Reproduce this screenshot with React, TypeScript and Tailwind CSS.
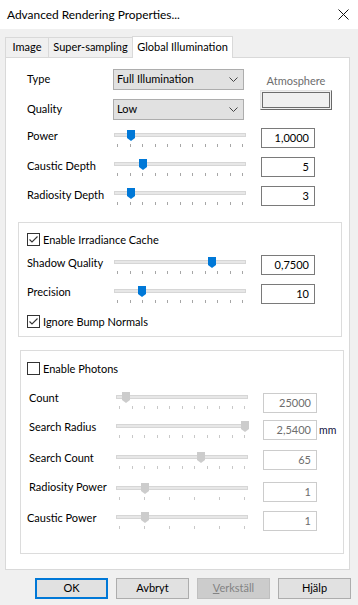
import React from "react";

const FONT = "font-['Lato','Noto_Sans',sans-serif]";

function Chevron() {
  return (
    <svg width="9" height="5" viewBox="0 0 9 5" className="shrink-0">
      <path d="M0.5 0.5L4.5 4.5L8.5 0.5" fill="none" stroke="#444" strokeWidth="1" />
    </svg>
  );
}

function Select({ text }: { text: string }) {
  return (
    <div className="flex h-[21px] w-[131px] items-center justify-between border border-[#adadad] bg-[#e1e1e1] pr-[5px] pl-[3px]">
      <span>{text}</span>
      <Chevron />
    </div>
  );
}

function Checkbox({ checked, label, cls }: { checked: boolean; label: string; cls: string }) {
  return (
    <div className={`flex h-[13px] items-center ${cls}`}>
      <div className="flex h-[13px] w-[13px] items-center justify-center border border-[#333] bg-white">
        {checked && (
          <svg width="11" height="11" viewBox="0 0 11 11">
            <path d="M1.5 5.5L4 8L9.5 2.5" fill="none" stroke="#333" strokeWidth="1.1" />
          </svg>
        )}
      </div>
      <span className="ml-[3px] leading-[16px] whitespace-nowrap">{label}</span>
    </div>
  );
}

function Slider({ pos, ticks = 11, disabled = false, cls }: { pos: number; ticks?: number; disabled?: boolean; cls: string }) {
  const color = disabled ? "#cccccc" : "#0078d7";
  return (
    <div className={`relative h-[18px] w-[132px] shrink-0 ${cls}`}>
      <div className="absolute top-[3px] right-0 left-0 h-[4px] border border-[#d6d6d6] bg-[#e7e7e7]" />
      <svg width="8" height="11" viewBox="0 0 8 11" className="absolute top-0" style={{ left: pos }}>
        <path d="M0 0H8V8L4 11L0 8Z" fill={color} />
      </svg>
      <div className="absolute top-[14px] right-[3px] left-[3px] flex justify-between">
        {Array.from({ length: ticks }).map((_, i) => (
          <div key={i} className={`h-[3px] w-px ${disabled ? "bg-[#c8c8c8]" : "bg-[#a6a6a6]"}`} />
        ))}
      </div>
    </div>
  );
}

type RowProps = {
  label: string;
  value: string;
  pos: number;
  lcls?: string;
  scls?: string;
  ticks?: number;
  disabled?: boolean;
  mm?: boolean;
  row: string;
};

function SliderRow({ label, value, pos, lcls = "ml-[8px] w-[87px] mt-0", scls = "mt-[2px]", ticks, disabled, mm, row }: RowProps) {
  return (
    <div className={`flex h-[20px] items-start ${row}`}>
      <span className={`shrink-0 leading-[16px] whitespace-nowrap ${lcls}`}>{label}</span>
      <Slider pos={pos} ticks={ticks} disabled={disabled} cls={scls} />
      <div
        className={`ml-[15px] flex h-[20px] w-[54px] shrink-0 items-center justify-end border bg-white pr-[5px] ${
          disabled ? "border-[#cccccc] text-[#6d6d6d]" : "border-[#7a7a7a]"
        }`}
      >
        {value}
      </div>
      {mm && <span className="mt-[3px] ml-[2px] text-[10.5px] text-[#101040]">mm</span>}
    </div>
  );
}

function Button({ label, cls = "", children }: { label?: string; cls?: string; children?: React.ReactNode }) {
  return (
    <div className={`flex h-[21px] w-[73px] items-center justify-center border ${cls}`}>
      {children ?? label}
    </div>
  );
}

export default function App() {
  return (
    <div className={`flex h-[605px] w-[358px] flex-col overflow-hidden bg-[#f0f0f0] text-[11px] text-black ${FONT}`}>
      <div className="flex h-[29px] items-center bg-white pl-[7px] text-[11.9px]">
        <span>Advanced Rendering Properties...</span>
        <svg width="11" height="11" viewBox="0 0 11 11" className="mr-[9px] ml-auto">
          <path d="M0.5 0.5L10.5 10.5M10.5 0.5L0.5 10.5" stroke="#111" strokeWidth="1" />
        </svg>
      </div>

      <div className="mt-[7px] flex h-[21px] items-end pl-[5px] whitespace-nowrap">
        <div className="flex h-[20px] w-[43px] items-center justify-center border-t border-l border-[#d9d9d9] bg-[#f0f0f0]">
          Image
        </div>
        <div className="flex h-[20px] w-[84px] items-center justify-center border-t border-l border-[#d9d9d9] bg-[#f0f0f0]">
          Super-sampling
        </div>
        <div className="relative z-10 -mb-px flex h-[22px] w-[101px] items-start justify-center border-x border-t border-[#d9d9d9] bg-white pt-[2px]">
          Global Illumination
        </div>
      </div>

      <div className="ml-[5px] flex w-[345px] flex-col border border-[#d9d9d9] bg-white pb-[15px]">
        <div className="flex">
          <div className="flex flex-col pl-[21px]">
            <div className="mt-[11px] flex h-[21px] items-center">
              <span className="w-[86px]">Type</span>
              <Select text="Full Illumination" />
            </div>
            <div className="mt-[9px] flex h-[21px] items-center">
              <span className="w-[86px]">Quality</span>
              <Select text="Low" />
            </div>
          </div>
          <div className="ml-[16px] flex w-[72px] flex-col items-center pt-[15px]">
            <span className="leading-[16px] text-[#6d6d6d]">Atmosphere</span>
            <div className="mt-[1px] h-[20px] w-[72px] border border-t-[#e3e3e3] border-r-[#696969] border-b-[#696969] border-l-[#e3e3e3] bg-[#f0f0f0] p-px">
              <div className="h-full w-full border border-[#6d6d6d] bg-[#f0f0f0]" />
            </div>
          </div>
        </div>

        <div className="flex flex-col pl-[13px]">
          <SliderRow label="Power" value="1,0000" pos={13} row="mt-[8px]" />
          <SliderRow label="Caustic Depth" value="5" pos={25} lcls="ml-[8px] w-[87px] mt-[1px]" row="mt-[9px]" />
          <SliderRow label="Radiosity Depth" value="3" pos={13} lcls="ml-[8px] w-[87px] mt-[1px]" row="mt-[9px]" />
        </div>

        <div className="mt-[16px] ml-[12px] flex w-[324px] flex-col border border-[#dcdcdc] pb-[8px]">
          <Checkbox checked label="Enable Irradiance Cache" cls="mt-[10px] ml-[8px]" />
          <SliderRow label="Shadow Quality" value="0,7500" pos={94} row="mt-[9px]" />
          <SliderRow label="Precision" value="10" pos={24} row="mt-[9px]" />
          <Checkbox checked label="Ignore Bump Normals" cls="mt-[11px] ml-[8px]" />
        </div>

        <div className="mt-[13px] ml-[14px] flex w-[324px] flex-col border border-[#dcdcdc] pb-[22px]">
          <Checkbox checked={false} label="Enable Photons" cls="mt-[11px] ml-[6px]" />
          <SliderRow label="Count" value="25000" pos={6} disabled lcls="ml-[8px] w-[87px] -mt-[3px]" scls="-mt-px" row="mt-[18px]" />
          <SliderRow label="Search Radius" value="2,5400" pos={125} disabled mm lcls="ml-[8px] w-[87px] -mt-px" scls="mt-px" row="mt-[7px]" />
          <SliderRow label="Search Count" value="65" pos={81} disabled scls="mt-[2px]" row="mt-[10px]" />
          <SliderRow label="Radiosity Power" value="1" pos={25} ticks={6} disabled lcls="ml-[8px] w-[87px] -mt-[3px]" scls="mt-px" row="mt-[12px]" />
          <SliderRow label="Caustic Power" value="1" pos={25} ticks={6} disabled lcls="ml-[6px] w-[89px] -mt-px" scls="mt-px" row="mt-[9px]" />
        </div>
      </div>

      <div className="mt-[8px] flex gap-[8px] pl-[35px]">
        <Button label="OK" cls="border-2 border-[#0078d7] bg-[#e1e1e1]" />
        <Button label="Avbryt" cls="border-[#adadad] bg-[#e1e1e1]" />
        <Button cls="border-[#bfbfbf] bg-[#cccccc] text-[#838383]">
          <span>
            <span className="underline">V</span>erkställ
          </span>
        </Button>
        <Button label="Hjälp" cls="border-[#adadad] bg-[#e1e1e1]" />
      </div>
    </div>
  );
}
